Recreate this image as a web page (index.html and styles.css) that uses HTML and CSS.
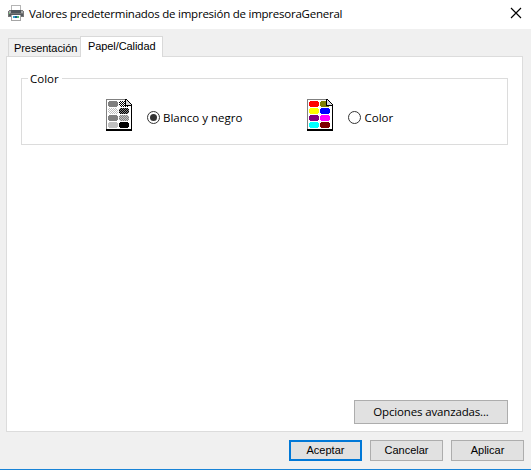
FILE: index.html
```html
<!DOCTYPE html>
<html lang="es">
<head>
<meta charset="utf-8">
<title>Valores predeterminados de impresión</title>
<link rel="stylesheet" href="styles.css">
</head>
<body>
<div class="window">
  <header class="titlebar">
    <svg class="printer" width="16" height="16" viewBox="0 0 16 16" shape-rendering="crispEdges">
      <path fill="#b5b5b5" d="M3 0h10v6H3z"/><path fill="#fff" d="M4 1h8v5H4z"/>
      <path fill="#777" d="M1 5h14v1h1v6H0V6h1z"/>
      <path fill="#a5a8aa" d="M1 6h14v2H1z"/><path fill="#50565b" d="M3 5h10v3H3z"/>
      <path fill="#555b60" d="M1 9h14v2H1z"/><path fill="#6dcc70" d="M1 8h1v1H1z"/>
      <path fill="#a5a5a5" d="M3 10h10v6H3z"/><path fill="#fff" d="M4 10h8v5H4z"/>
      <path fill="#35a4ca" d="M5 11h2v2H5z"/><path fill="#195a91" d="M7 11h2v2H7z"/><path fill="#54b875" d="M9 11h2v2H9z"/>
    </svg>
    <h1 class="title">Valores predeterminados de impresión de impresoraGeneral</h1>
    <svg class="close" width="12" height="12" viewBox="0 0 12 12"><path d="M1 1l10 10M11 1L1 11" stroke="#000" stroke-width="1.15"/></svg>
  </header>
  <nav class="tabs">
    <div class="tab">Presentación</div>
    <div class="tab active">Papel/Calidad</div>
  </nav>
  <main class="panel">
    <section class="group">
      <h2 class="legend">Color</h2>
      <div class="choices">
        <label class="choice">
          <svg class="doc" width="27" height="32" viewBox="0 0 27 32" shape-rendering="crispEdges">
            <defs>
              <pattern id="light" width="2" height="2" patternUnits="userSpaceOnUse"><path fill="#fff" d="M0 0h2v2H0z"/><path fill="#c0c0c0" d="M0 0h1v1H0zM1 1h1v1H1z"/></pattern>
              <pattern id="dark" width="2" height="2" patternUnits="userSpaceOnUse"><path fill="#808080" d="M0 0h2v2H0z"/><path fill="#000" d="M0 0h1v1H0zM1 1h1v1H1z"/></pattern>
              <pattern id="mid" width="2" height="2" patternUnits="userSpaceOnUse"><path fill="#c0c0c0" d="M0 0h2v2H0z"/><path fill="#808080" d="M0 0h1v1H0zM1 1h1v1H1z"/></pattern>
              <pattern id="check" width="2" height="2" patternUnits="userSpaceOnUse"><path fill="#fff" d="M0 0h2v2H0z"/><path fill="#000" d="M0 0h1v1H0zM1 1h1v1H1z"/></pattern>
            </defs>
            <path fill="#808080" d="M0 0h20v1H1v30H0z"/><path fill="#fff" d="M1 1h19l5 5v24H1z"/>
            <path fill="#808080" d="M3 2h8v1h1v4h-1v1H3V7H2V3h1z"/>
            <path fill="url(#check)" d="M14 2h5v4h4v1h-1v1h-8V7h-1V3h1z"/>
            <path fill="url(#light)" d="M3 9h8v1h1v4h-1v1H3v-1H2v-4h1z"/>
            <path fill="url(#dark)" d="M14 9h8v1h1v4h-1v1h-8v-1h-1v-4h1z"/>
            <path fill="#808080" d="M3 16h8v1h1v4h-1v1H3v-1H2v-4h1z"/>
            <path fill="url(#mid)" d="M14 16h8v1h1v4h-1v1h-8v-1h-1v-4h1z"/>
            <path fill="#c0c0c0" d="M3 23h8v1h1v4h-1v1H3v-1H2v-4h1z"/>
            <path d="M14 23h8v1h1v4h-1v1h-8v-1h-1v-4h1z"/>
            <path fill="#d8d8d8" d="M20 1h1v1h1v1h1v1h1v1h1v1h-5z"/>
            <path d="M0 30h26v2H0zM25 6h1v24h-1zM19 0h1v6h-1zM19 6h6v1h-6zM20 0h1v1h-1zM21 1h1v1h-1zM22 2h1v1h-1zM23 3h1v1h-1zM24 4h1v1h-1zM25 5h1v1h-1z"/>
          </svg>
          <span class="radio checked"></span><span class="bw">Blanco y negro</span>
        </label>
        <label class="choice">
          <svg class="doc" width="27" height="32" viewBox="0 0 27 32" shape-rendering="crispEdges">
            <path fill="#808080" d="M0 0h20v1H1v30H0z"/><path fill="#fff" d="M1 1h19l5 5v24H1z"/>
            <path fill="#f00" d="M3 2h8v1h1v4h-1v1H3V7H2V3h1z"/>
            <path fill="#808000" d="M14 2h5v4h4v1h-1v1h-8V7h-1V3h1z"/>
            <path fill="#ff0" d="M3 9h8v1h1v4h-1v1H3v-1H2v-4h1z"/>
            <path fill="#00f" d="M14 9h8v1h1v4h-1v1h-8v-1h-1v-4h1z"/>
            <path fill="#800080" d="M3 16h8v1h1v4h-1v1H3v-1H2v-4h1z"/>
            <path fill="#f0f" d="M14 16h8v1h1v4h-1v1h-8v-1h-1v-4h1z"/>
            <path fill="#0ff" d="M3 23h8v1h1v4h-1v1H3v-1H2v-4h1z"/>
            <path fill="#800000" d="M14 23h8v1h1v4h-1v1h-8v-1h-1v-4h1z"/>
            <path fill="#d8d8d8" d="M20 1h1v1h1v1h1v1h1v1h1v1h-5z"/>
            <path d="M0 30h26v2H0zM25 6h1v24h-1zM19 0h1v6h-1zM19 6h6v1h-6zM20 0h1v1h-1zM21 1h1v1h-1zM22 2h1v1h-1zM23 3h1v1h-1zM24 4h1v1h-1zM25 5h1v1h-1z"/>
          </svg>
          <span class="radio"></span><span class="col">Color</span>
        </label>
      </div>
    </section>
    <button class="btn advanced">Opciones avanzadas...</button>
  </main>
  <footer class="actions">
    <button class="btn primary">Aceptar</button>
    <button class="btn">Cancelar</button>
    <button class="btn">Aplicar</button>
  </footer>
</div>
</body>
</html>
```

FILE: styles.css
```css
* { box-sizing: border-box; }
body { margin: 0; color: #000; font: 12px/16px "Open Sans", "Noto Sans", sans-serif; }
.window { width: 531px; height: 470px; display: flex; flex-direction: column; background: #f0f0f0; border-bottom: 1px solid #1883d7; }
.titlebar { height: 29px; flex: none; background: #fff; display: flex; align-items: flex-start; padding: 5px 9px 0 8px; }
.title { margin: 1px auto 0 5px; font-size: 11.5px; font-weight: 400; line-height: 16px; white-space: nowrap; letter-spacing: -0.24px; }
.close { margin-top: 2px; }
.tabs { height: 28px; flex: none; display: flex; align-items: flex-end; padding-left: 8px; margin-bottom: -1px; position: relative; }
.tab { height: 19px; width: 73px; border: 1px solid #d9d9d9; border-right: 0; font: 11px/18px "Liberation Sans", Arial, sans-serif; white-space: nowrap; padding-left: 5px; letter-spacing: -0.08px; }
.tab.active { width: 83px; height: 21px; margin-left: -1px; background: #fff; border-right: 1px solid #d9d9d9; border-bottom: 0; padding-left: 7px; }
.panel { height: 376px; flex: none; margin: 0 8px 0 6px; background: #fff; border: 1px solid #dcdcdc; padding: 21px 14px 7px; display: flex; flex-direction: column; }
.group { height: 67px; border: 1px solid #dcdcdc; }
.legend { margin: -8px 0 0 6px; padding: 0 3px 0 2px; background: #fff; width: 34px; font-size: 11.5px; font-weight: 400; line-height: 16px; }
.choices { display: flex; margin-top: 12px; padding-left: 84px; }
.choice { display: flex; width: 201px; height: 32px; align-items: center; white-space: nowrap; }
.radio { width: 13px; height: 13px; border: 1px solid #333; border-radius: 50%; margin: 5px 3px 0 14px; display: flex; align-items: center; justify-content: center; }
.checked::after { content: ""; width: 7px; height: 7px; background: #333; border-radius: 50%; }
.bw, .col { margin-top: 5px; font-size: 11.5px; }
.col { padding-left: 1px; }
.btn { width: 73px; height: 21px; padding: 0; border: 1px solid #adadad; background: #e1e1e1; color: #000; font: 11px/19px "Liberation Sans", Arial, sans-serif; }
.advanced { width: 154px; height: 24px; margin: auto 0 0 auto; font: 11.5px/20px "Open Sans", "Noto Sans", sans-serif; letter-spacing: -0.15px; }
.actions { display: flex; justify-content: flex-end; gap: 8px; padding: 8px 7px 0 0; }
.primary { border: 2px solid #0078d7; line-height: 17px; }
```
